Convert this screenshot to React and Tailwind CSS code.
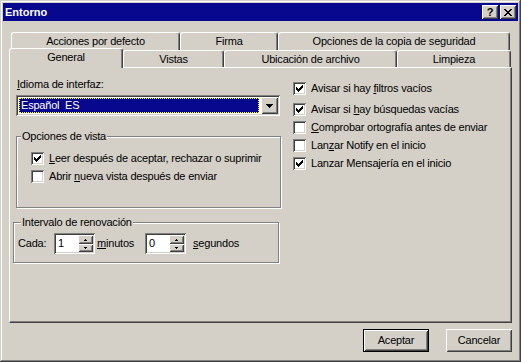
const sunken =
  "shadow-[inset_1px_1px_0_#808080,inset_-1px_-1px_0_#ffffff,inset_2px_2px_0_#404040,inset_-2px_-2px_0_#d4d0c8]";
const raised =
  "shadow-[inset_1px_1px_0_#ffffff,inset_-1px_-1px_0_#404040,inset_2px_2px_0_#d4d0c8,inset_-2px_-2px_0_#808080]";

function Check({ checked }) {
  return (
    <div className={`w-[13px] h-[13px] bg-white shrink-0 flex items-center justify-center ${sunken}`}>
      {checked && (
        <svg width="7" height="7" viewBox="0 0 7 7" shapeRendering="crispEdges">
          <path
            d="M6 0h1v1h-1zM5 1h2v1h-2zM0 2h1v1h-1zM4 2h3v1h-3zM0 3h2v1h-2zM3 3h3v1h-3zM0 4h5v1h-5zM1 5h3v1h-3zM2 6h1v1h-1z"
            fill="#000"
          />
        </svg>
      )}
    </div>
  );
}

function CheckRow({ checked, children, className = "" }) {
  return (
    <div className={`flex items-center gap-[5px] h-[13px] ${className}`}>
      <Check checked={checked} />
      <span className="whitespace-nowrap">{children}</span>
    </div>
  );
}

function Tab({ w, h, selected, children }) {
  return (
    <div
      className={`${w} ${h} shrink-0 flex items-center justify-center bg-[#d4d0c8] border-t border-l border-r border-t-white border-l-white border-r-[#404040] rounded-tl-[3px] rounded-tr-[3px] shadow-[inset_-1px_0_0_#808080] whitespace-nowrap ${
        selected ? "relative z-10 -mb-[1px] pb-[3px]" : ""
      }`}
    >
      {children}
    </div>
  );
}

function SpinBtn({ up, h }) {
  return (
    <div className={`${h} w-[15px] bg-[#d4d0c8] flex items-center justify-center ${raised}`}>
      <svg width="3" height="2" viewBox="0 0 3 2" shapeRendering="crispEdges">
        {up ? (
          <path d="M1 0h1v1h-1zM0 1h3v1h-3z" fill="#000" />
        ) : (
          <path d="M0 0h3v1h-3zM1 1h1v1h-1z" fill="#000" />
        )}
      </svg>
    </div>
  );
}

function Spinner({ value }) {
  return (
    <div className={`w-[41px] h-[21px] bg-white flex p-[2px] shrink-0 ${sunken}`}>
      <span className="flex-1 pl-[2px] leading-[17px]">{value}</span>
      <div className="w-[15px] flex flex-col">
        <SpinBtn up h="h-[9px]" />
        <SpinBtn h="h-[8px]" />
      </div>
    </div>
  );
}

function Button({ children, def }) {
  return (
    <div
      className={`w-[66px] h-[23px] flex items-center justify-center bg-[#d4d0c8] ${
        def ? "border border-black" : ""
      }`}
    >
      <div className={`w-full h-full flex items-center justify-center ${raised}`}>{children}</div>
    </div>
  );
}

export default function App() {
  return (
    <div className="w-[521px] h-[362px] bg-[#d4d0c8] p-[3px] flex flex-col text-[11px] leading-[13px] text-black tracking-[-0.2px] font-['Liberation_Sans','Arial',sans-serif] shadow-[inset_-1px_-1px_0_#404040,inset_1px_1px_0_#d4d0c8,inset_-2px_-2px_0_#808080,inset_2px_2px_0_#ffffff]">
      {/* Title bar */}
      <div className="h-[18px] shrink-0 bg-[#08088f] flex items-center justify-between pl-[2px] pr-[2px]">
        <span className="text-white font-bold tracking-normal">Entorno</span>
        <div className="flex gap-[2px]">
          <div className={`w-[16px] h-[14px] bg-[#d4d0c8] flex items-center justify-center font-bold text-[11px] leading-[14px] ${raised}`}>
            ?
          </div>
          <div className={`w-[16px] h-[14px] bg-[#d4d0c8] flex items-center justify-center ${raised}`}>
            <svg width="8" height="7" viewBox="0 0 8 7" shapeRendering="crispEdges">
              <path
                d="M0 0h2v1h-2zM6 0h2v1h-2zM1 1h2v1h-2zM5 1h2v1h-2zM2 2h4v1h-4zM3 3h2v1h-2zM2 4h4v1h-4zM1 5h2v1h-2zM5 5h2v1h-2zM0 6h2v1h-2zM6 6h2v1h-2z"
                fill="#000"
              />
            </svg>
          </div>
        </div>
      </div>

      {/* Tabs */}
      <div className="mt-[11px] flex flex-col shrink-0">
        <div className="h-[16px] flex ml-[8px]">
          <Tab w="w-[169px]" h="h-[18px]">Acciones por defecto</Tab>
          <Tab w="w-[98px]" h="h-[18px]">Firma</Tab>
          <Tab w="w-[232px]" h="h-[18px]">Opciones de la copia de seguridad</Tab>
        </div>
        <div className="h-[19px] flex items-end ml-[6px]">
          <Tab w="w-[114px]" h="h-[20px]" selected>General</Tab>
          <Tab w="w-[101px]" h="h-[17px]">Vistas</Tab>
          <Tab w="w-[173px]" h="h-[17px]">Ubicación de archivo</Tab>
          <Tab w="w-[114px]" h="h-[17px]">Limpieza</Tab>
        </div>
      </div>

      {/* Panel */}
      <div className="ml-[6px] w-[503px] h-[256px] shrink-0 border border-t-white border-l-white border-r-[#404040] border-b-[#404040] shadow-[inset_-1px_-1px_0_#808080] flex pl-[3px]">
        {/* Left column */}
        <div className="w-[268px] flex flex-col">
          <div className="mt-[10px] pl-[4px] whitespace-nowrap">
            <u>I</u>dioma de interfaz:
          </div>
          <div className={`mt-[4px] ml-[3px] w-[264px] h-[21px] bg-white p-[2px] flex ${sunken}`}>
            <div className="flex-1 p-[1px] pr-[1px]">
              <div className="h-full bg-[#08088f] border border-dotted border-[#ffff00] text-white pl-[1px] leading-[13px] whitespace-pre">
                Español  ES
              </div>
            </div>
            <div className={`w-[17px] h-[17px] ml-[1px] bg-[#d4d0c8] flex items-center justify-center ${raised}`}>
              <svg width="7" height="4" viewBox="0 0 7 4" shapeRendering="crispEdges">
                <path d="M0 0h7v1h-7zM1 1h5v1h-5zM2 2h3v1h-3zM3 3h1v1h-1z" fill="#000" />
              </svg>
            </div>
          </div>

          <div className="mt-[20px] ml-[3px] w-[265px] h-[72px] relative border border-[#808080] shadow-[1px_1px_0_#ffffff,inset_1px_1px_0_#ffffff] pt-[15px] pl-[14px]">
            <span className="absolute -top-[7px] left-[4px] px-[1px] bg-[#d4d0c8] whitespace-nowrap">
              Opciones de vista
            </span>
            <CheckRow checked>
              <u>L</u>eer después de aceptar, rechazar o suprimir
            </CheckRow>
            <CheckRow className="mt-[5px]">
              Abrir <u>n</u>ueva vista después de enviar
            </CheckRow>
          </div>

          <div className="mt-[14px] w-[266px] h-[41px] relative border border-[#808080] shadow-[1px_1px_0_#ffffff,inset_1px_1px_0_#ffffff] pt-[10px] pl-[4px]">
            <span className="absolute -top-[7px] left-[7px] px-[1px] bg-[#d4d0c8] whitespace-nowrap">
              Intervalo de renovación
            </span>
            <div className="flex items-center h-[21px]">
              <span className="w-[36px]">Cada:</span>
              <Spinner value="1" />
              <span className="ml-[2px] w-[48px]">
                <u>m</u>inutos
              </span>
              <Spinner value="0" />
              <span className="ml-[7px]">
                <u>s</u>egundos
              </span>
            </div>
          </div>
        </div>

        {/* Right column */}
        <div className="ml-[12px] pt-[14px] flex flex-col">
          <CheckRow checked>
            Avisar si hay <u>f</u>iltros vacíos
          </CheckRow>
          <CheckRow checked className="mt-[8px]">
            Avisar si <u>h</u>ay búsquedas vacías
          </CheckRow>
          <CheckRow className="mt-[5px]">
            <u>C</u>omprobar ortografía antes de enviar
          </CheckRow>
          <CheckRow className="mt-[5px]">
            Lan<u>z</u>ar Notify en el inicio
          </CheckRow>
          <CheckRow checked className="mt-[5px]">
            Lanzar Mensajería en el inicio
          </CheckRow>
        </div>
      </div>

      {/* Buttons */}
      <div className="mt-[6px] flex justify-end gap-[17px] pr-[6px]">
        <Button def>Aceptar</Button>
        <Button>Cancelar</Button>
      </div>
    </div>
  );
}
